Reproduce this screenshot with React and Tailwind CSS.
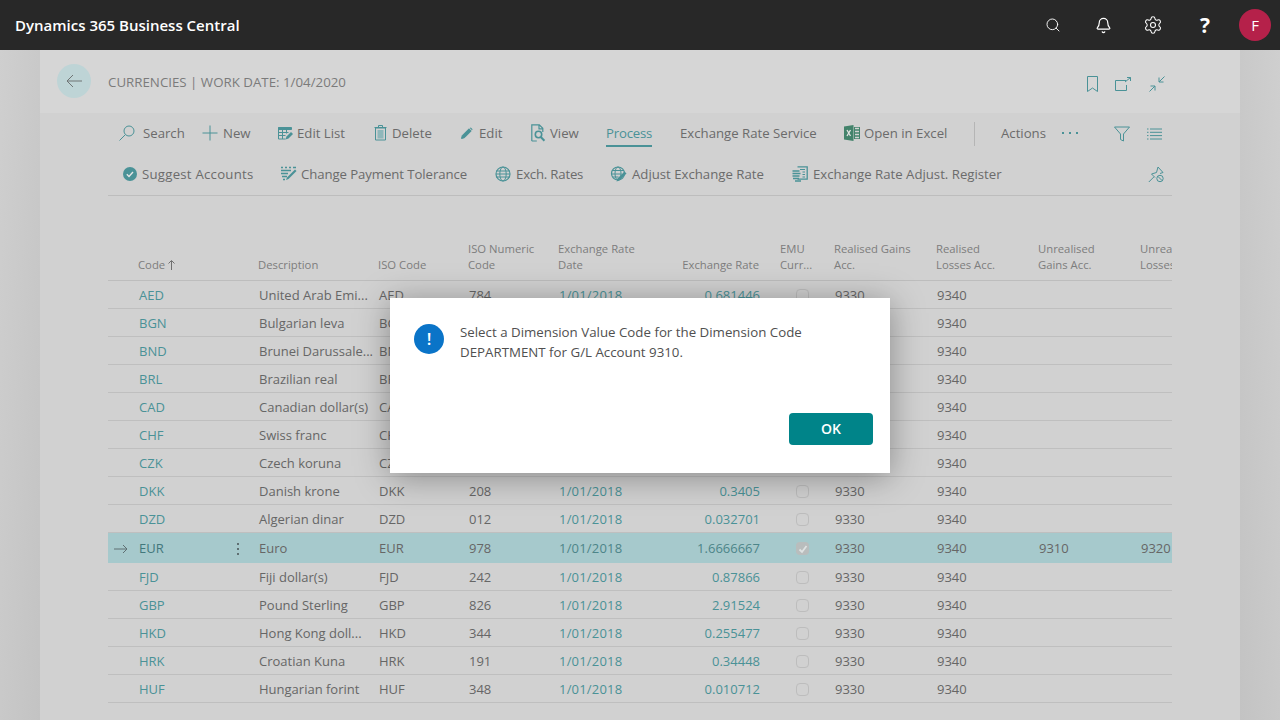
import React from "react";
import { Bell, Settings, Search } from "lucide-react";

const gridCols = "grid grid-cols-[31px_90px_30px_120px_90px_90px_110px_91px_75px_102px_102px_102px_31px]";

const rows = [
  ["AED", "United Arab Emi...", "AED", "784", "0.681446", false],
  ["BGN", "Bulgarian leva", "BGN", "975", "0.511292", false],
  ["BND", "Brunei Darussale...", "BND", "096", "0.60245", false],
  ["BRL", "Brazilian real", "BRL", "986", "0.22471", false],
  ["CAD", "Canadian dollar(s)", "CAD", "124", "0.63982", false],
  ["CHF", "Swiss franc", "CHF", "756", "0.8411", false],
  ["CZK", "Czech koruna", "CZK", "203", "0.03851", false],
  ["DKK", "Danish krone", "DKK", "208", "0.3405", false],
  ["DZD", "Algerian dinar", "DZD", "012", "0.032701", false],
  ["EUR", "Euro", "EUR", "978", "1.6666667", true],
  ["FJD", "Fiji dollar(s)", "FJD", "242", "0.87866", false],
  ["GBP", "Pound Sterling", "GBP", "826", "2.91524", false],
  ["HKD", "Hong Kong doll...", "HKD", "344", "0.255477", false],
  ["HRK", "Croatian Kuna", "HRK", "191", "0.34448", false],
  ["HUF", "Hungarian forint", "HUF", "348", "0.010712", false],
];

const teal = "#4a9297";

function Ico({ w = 16, h = 16, children }) {
  return (
    <svg width={w} height={h} viewBox={`0 0 ${w} ${h}`} fill="none" stroke={teal} strokeWidth="1" className="shrink-0">
      {children}
    </svg>
  );
}

const SearchIcon = () => (
  <Ico>
    <circle cx="10" cy="6" r="5" />
    <path d="M6.3 9.7 0.5 15.5" />
  </Ico>
);
const PlusIcon = () => (
  <Ico>
    <path d="M8 0.5v15M0.5 8h15" />
  </Ico>
);
const EditListIcon = () => (
  <Ico w={15} h={15}>
    <path d="M0.5 1.5h13v2h-13z" fill={teal} />
    <path d="M0.5 1.5v11.5h7M4.5 3.5v9.5M8.5 3.5v4M0.5 6.5h10M0.5 9.5h7" />
    <path d="M7.5 13.5l1-3 4.5-4.5 2 2-4.5 4.5z" fill={teal} stroke="none" />
  </Ico>
);
const DeleteIcon = () => (
  <Ico w={13} h={16}>
    <path d="M1.5 3h10v12h-10z" />
    <path d="M3.5 5h6v8.5h-6z" fill="#8fb7ba" stroke="none" />
    <path d="M0.5 2.5h12M4.5 2.5v-2h4v2" />
  </Ico>
);
const PencilIcon = () => (
  <Ico w={12} h={12}>
    <path d="M0.5 11.5l0.8-3 6.7-6.7 2.2 2.2-6.7 6.7z" fill={teal} />
    <path d="M8.8 1l1-0.6 1.8 1.8-0.6 1z" fill={teal} stroke="none" />
  </Ico>
);
const ViewIcon = () => (
  <Ico w={15} h={18}>
    <path d="M0.8 17V0.8h7.5l3.5 3.5V8M8 0.8v4h3.8M0.8 17h5" strokeWidth="1.2" />
    <circle cx="7.5" cy="10.5" r="3.2" strokeWidth="1.6" />
    <path d="M9.8 13l3.6 3.8" strokeWidth="2" />
  </Ico>
);
const ExcelIcon = () => (
  <svg width="16" height="16" viewBox="0 0 16 16" className="shrink-0">
    <path d="M0 1.5 9.5 0v16L0 14.5z" fill="#43836b" />
    <path d="M10 2h6v12h-6z" fill="#43836b" />
    <path d="M11 3.5h4M11 6.5h4M11 9.5h4M11 12.5h4" stroke="#d3d3d3" strokeWidth="1.4" />
    <path d="M3 5l3.5 6M6.5 5 3 11" stroke="#e4e4e4" strokeWidth="1.3" />
  </svg>
);
const CheckCircleIcon = () => (
  <svg width="14" height="14" viewBox="0 0 14 14" className="shrink-0">
    <circle cx="7" cy="7" r="7" fill={teal} />
    <path d="M3.8 7.2l2.2 2.2 4-4.4" fill="none" stroke="#e6e6e6" strokeWidth="1.4" />
  </svg>
);
const ChangeIcon = () => (
  <Ico w={17} h={17}>
    <path d="M1 1.5h2M5 1.5h2M9 1.5h2M13 1.5h3M1 4.5h10M1 7.5h7M2 10.5h5M3 13.5h2" strokeWidth="1.4" />
    <path d="M15 3.5l1.5 1.5-8 8-2.5 1 1-2.5z" fill={teal} stroke="none" />
  </Ico>
);
const GlobeIcon = () => (
  <Ico w={16} h={16}>
    <circle cx="8" cy="8" r="7" strokeWidth="1.2" />
    <ellipse cx="8" cy="8" rx="3.2" ry="7" />
    <path d="M1 5h14M1 8h14M1 11h14" strokeWidth="1.2" />
  </Ico>
);
const AdjustIcon = () => (
  <Ico w={17} h={17}>
    <circle cx="8" cy="7.5" r="6.5" strokeWidth="1.2" />
    <ellipse cx="8" cy="7.5" rx="3" ry="6.5" />
    <path d="M2 4.5h12M1.5 8h10M2.5 11h6" strokeWidth="1.2" />
    <path d="M14.5 5.5l2 2-7 7-3 1 1-3z" fill={teal} stroke="none" />
  </Ico>
);
const RegisterIcon = () => (
  <Ico w={16} h={16}>
    <path d="M5.5 0.8h9.7v12.4H5.5" strokeWidth="1.3" />
    <path d="M8 3.5h5M10.5 6h2.5M10.5 8.5h2.5M10.5 11h2.5" strokeWidth="1.2" />
    <path d="M0.5 5h7M0.5 7.5h8M0.5 10h7M1 12.5h6M3 15h6" strokeWidth="1.4" />
  </Ico>
);
const FilterIcon = () => (
  <Ico w={16} h={16}>
    <path d="M0.5 1h15l-6 7v7l-3-1.5V8z" />
  </Ico>
);
const ListIcon = () => (
  <Ico w={15} h={12}>
    <path d="M0 1h1.5M0 4.3h1.5M0 7.6h1.5M0 11h1.5M3 1h12M3 4.3h12M3 7.6h12M3 11h12" />
  </Ico>
);
const PinIcon = () => (
  <Ico w={16} h={17}>
    <path d="M0.8 16 6 10.8M3.5 8 8.5 6.5 10 1l5 5.5-3 1" />
    <path d="M3.5 8 7 11.5" />
    <circle cx="12" cy="12.5" r="3.2" />
    <path d="M9.8 10.3l4.4 4.4" />
  </Ico>
);

function Action({ icon, label, className = "" }) {
  return (
    <div className={`flex items-center shrink-0 ${className}`}>
      {icon}
      <span className="whitespace-nowrap">{label}</span>
    </div>
  );
}

function Row({ r }) {
  const [code, desc, iso, num, rate, selected] = r;
  const numbers = selected ? "text-[#4d8589]" : "text-[#4a9297]";
  return (
    <div className={`${gridCols} items-center pt-[2px] text-[13px] text-[#666666] ${selected ? "h-[30px] bg-[#a6c9cc] border-b border-[#a6c9cc]" : "h-7 border-b border-[#bfbfbf]"}`}>
      <div className="pl-[6px] flex items-center">
        {selected && (
          <svg width="14" height="10" viewBox="0 0 14 10" fill="none" stroke="#5f6f72">
            <path d="M0 5h13M9 1l4 4-4 4" />
          </svg>
        )}
      </div>
      <div className={selected ? "text-[#43787c]" : "text-[#4a9297]"}>{code}</div>
      <div className="pl-[5px]">
        {selected && (
          <svg width="8" height="16" viewBox="0 0 8 16" fill="#5f6f72">
            <rect x="3" y="2" width="2" height="2" />
            <rect x="3" y="7" width="2" height="2" />
            <rect x="3" y="12" width="2" height="2" />
          </svg>
        )}
      </div>
      <div className="whitespace-nowrap">{desc}</div>
      <div>{iso}</div>
      <div>{num}</div>
      <div className={`tracking-[0.2px] ${numbers}`}>1/01/2018</div>
      <div className={`text-right ${numbers}`}>{rate}</div>
      <div className="pl-[36px]">
        {selected ? (
          <div className="w-[13px] h-[13px] rounded-sm bg-[#b9bdbd] flex items-center justify-center">
            <svg width="10" height="10" viewBox="0 0 10 10" fill="none" stroke="#dfe3e3" strokeWidth="1.8">
              <path d="M1.5 5.5l2.5 2.5 4.5-6" />
            </svg>
          </div>
        ) : (
          <div className="w-[13px] h-[13px] rounded-sm border border-[#bdbdbd]" />
        )}
      </div>
      <div>9330</div>
      <div>9340</div>
      <div>{selected ? "9310" : ""}</div>
      <div>{selected ? "9320" : ""}</div>
    </div>
  );
}

export default function App() {
  return (
    <div className="relative w-[1280px] h-[720px] overflow-hidden font-['Open_Sans',sans-serif] bg-[#c8c8c8]">
      <header className="h-[50px] bg-[#282828] flex items-center justify-between pl-[15px] text-white">
        <div className="text-[15px] font-semibold">Dynamics 365 Business Central</div>
        <div className="flex items-center">
          <div className="w-[50px] flex justify-center"><Search size={16} strokeWidth={1.4} /></div>
          <div className="w-[50px] flex justify-center"><Bell size={17} strokeWidth={1.7} /></div>
          <div className="w-[50px] flex justify-center mr-[2px]"><Settings size={20} strokeWidth={1.3} /></div>
          <div className="w-[50px] flex justify-center text-[21px] font-bold leading-none">?</div>
          <div className="w-[50px] flex justify-center">
            <div className="w-8 h-8 rounded-full bg-[#b5214a] flex items-center justify-center text-[15px]">F</div>
          </div>
        </div>
      </header>

      <div className="flex h-[670px]">
        <div className="w-10 bg-gradient-to-br from-[#cfcfcf] to-[#c3c3c3]" />
        <main className="w-[1200px] bg-[#d1d1d1] overflow-hidden">
          <div className="h-[63px] bg-[#d6d6d6] flex pl-[17px] pr-[75px] pt-[14px]">
            <div className="w-[34px] h-[34px] rounded-full bg-[#bed4d6] flex items-center justify-center">
              <svg width="16" height="14" viewBox="0 0 16 14" fill="none" stroke="#6f7474">
                <path d="M16 7H1M7 1 1 7l6 6" />
              </svg>
            </div>
            <div className="ml-[17px] mt-[9px] text-[13.3px] text-[#7b7b7b] uppercase whitespace-nowrap h-[18px]">Currencies | Work Date: 1/04/2020</div>
            <div className="ml-auto flex items-center gap-[17px] h-[38px] pt-[2px]">
              <svg width="11" height="16" viewBox="0 0 11 16" fill="none" stroke={teal}>
                <path d="M0.5 0.5h10v15l-5-3.5-5 3.5z" />
              </svg>
              <svg width="16" height="14" viewBox="0 0 16 14" fill="none" stroke={teal} className="mr-px">
                <path d="M11 3.5H0.5v10h11V8M10 5l5.5-4.5M12 0.5h3.5V4" />
              </svg>
              <svg width="16" height="16" viewBox="0 0 16 16" fill="none" stroke={teal}>
                <path d="M15.5 0.5 10 6M10 1.5V6h4.5M0.5 15.5 6 10M6 14.5V10H1.5" />
              </svg>
            </div>
          </div>

          <div className="mx-[68px] text-[13.2px] text-[#6b6b6b]">
            <div className="h-[41px] flex items-center pl-[11px]">
              <Action className="w-[83px] gap-2" icon={<SearchIcon />} label="Search" />
              <Action className="w-[76px] gap-[5px]" icon={<PlusIcon />} label="New" />
              <Action className="w-[96px] gap-[4px]" icon={<EditListIcon />} label="Edit List" />
              <Action className="w-[87px] gap-[5px]" icon={<DeleteIcon />} label="Delete" />
              <Action className="w-[70px] gap-[6px]" icon={<PencilIcon />} label="Edit" />
              <Action className="w-[75px] gap-[4px]" icon={<ViewIcon />} label="View" />
              <div className="w-[74px] shrink-0">
                <div className="w-fit h-[24px] flex items-center border-b-2 border-[#4a9297] text-[#4a9297] tracking-[-0.2px] mt-[2px]">Process</div>
              </div>
              <div className="w-[164px] shrink-0 whitespace-nowrap">Exchange Rate Service</div>
              <Action className="w-[130px] gap-[4px]" icon={<ExcelIcon />} label="Open in Excel" />
              <div className="w-[27px] shrink-0">
                <div className="w-px h-[24px] bg-[#b5b5b5]" />
              </div>
              <div className="w-[61px] shrink-0">Actions</div>
              <div className="flex gap-[5px] mb-[2px]">
                <span className="w-[2px] h-[2px] bg-[#4a9297]" />
                <span className="w-[2px] h-[2px] bg-[#4a9297]" />
                <span className="w-[2px] h-[2px] bg-[#4a9297]" />
              </div>
              <div className="ml-auto flex items-center gap-[17px] pr-[10px]">
                <FilterIcon />
                <ListIcon />
              </div>
            </div>
            <div className="h-[42px] flex items-center border-b border-[#bdbdbd] pl-[15px]">
              <Action className="w-[157px] gap-[5px] tracking-[0.25px]" icon={<CheckCircleIcon />} label="Suggest Accounts" />
              <Action className="w-[215px] gap-[4px] tracking-[-0.08px]" icon={<ChangeIcon />} label="Change Payment Tolerance" />
              <Action className="w-[115px] gap-[5px] tracking-[-0.2px]" icon={<GlobeIcon />} label="Exch. Rates" />
              <Action className="w-[182px] gap-[5px]" icon={<AdjustIcon />} label="Adjust Exchange Rate" />
              <Action className="gap-[5px]" icon={<RegisterIcon />} label="Exchange Rate Adjust. Register" />
              <div className="ml-auto pr-[8px]">
                <PinIcon />
              </div>
            </div>

            <div className={`${gridCols} h-[85px] items-end pb-[7px] border-b border-[#bdbdbd] text-[11.3px] leading-4 text-[#7d7d7d]`}>
              <div />
              <div className="-ml-px flex items-center gap-[3px]">
                Code
                <svg width="7" height="10" viewBox="0 0 7 10" fill="none" stroke="#6f6f6f">
                  <path d="M3.5 10V1M0.5 3.5l3-3 3 3" />
                </svg>
              </div>
              <div />
              <div className="-ml-px">Description</div>
              <div className="-ml-px">ISO Code</div>
              <div className="-ml-px">ISO Numeric<br />Code</div>
              <div className="-ml-px">Exchange Rate<br />Date</div>
              <div className="text-right whitespace-nowrap pr-px">Exchange Rate</div>
              <div className="pl-[20px]">EMU<br />Curr...</div>
              <div className="-ml-px whitespace-nowrap">Realised Gains<br />Acc.</div>
              <div className="-ml-px whitespace-nowrap">Realised<br />Losses Acc.</div>
              <div className="-ml-px whitespace-nowrap">Unrealised<br />Gains Acc.</div>
              <div className="-ml-px overflow-hidden whitespace-nowrap">Unrealised<br />Losses Acc.</div>
            </div>

            {rows.map((r) => (
              <Row key={r[0]} r={r} />
            ))}
          </div>
        </main>
        <div className="w-10 bg-gradient-to-bl from-[#cfcfcf] to-[#c3c3c3]" />
      </div>

      <div className="absolute left-[390px] top-[298px] w-[500px] h-[175px] bg-white shadow-[0_4px_32px_rgba(0,0,0,0.35)] flex flex-col pl-[24px] pr-[17px] pt-[26px] pb-[28px]">
        <div className="flex gap-[16px]">
          <div className="w-[30px] h-[30px] rounded-full bg-[#0a74c8] text-white flex items-center justify-center text-[17px] font-semibold shrink-0">!</div>
          <p className="text-[13.3px] leading-5 text-[#505050] -mt-[2px]">
            Select a Dimension Value Code for the Dimension Code<br />DEPARTMENT for G/L Account 9310.
          </p>
        </div>
        <button className="mt-auto ml-auto w-[84px] h-8 pb-px rounded-sm bg-[#008489] text-white text-[14px] font-semibold">OK</button>
      </div>
    </div>
  );
}
